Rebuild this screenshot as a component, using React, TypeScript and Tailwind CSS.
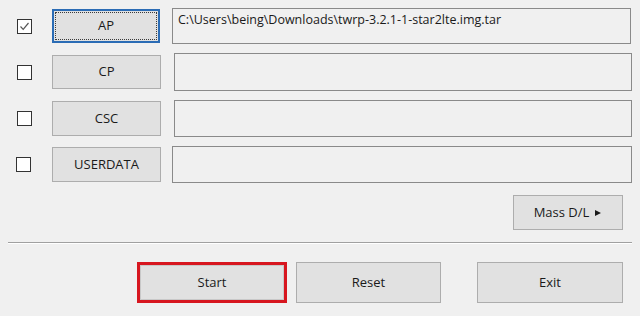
import React from "react";

const font = { fontFamily: '"Open Sans", "Noto Sans", sans-serif' };

function Checkbox({ checked }: { checked?: boolean }) {
  return (
    <div className="w-[15px] h-[15px] border border-[#333333] bg-white flex items-center justify-center shrink-0">
      {checked && (
        <svg width="11" height="11" viewBox="0 0 11 11">
          <polyline points="1.5,5.5 4.2,8.3 9.5,2" fill="none" stroke="#555" strokeWidth="1.2" />
        </svg>
      )}
    </div>
  );
}

function Btn({ label, focused, className = "", children }: { label?: string; focused?: boolean; className?: string; children?: React.ReactNode }) {
  if (focused) {
    return (
      <div className={`border-2 border-[#2b6cb5] bg-[#e1e1e1] p-[1px] shrink-0 ${className}`}>
        <div className="w-full h-full border border-dotted border-[#3a3a3a] flex items-center justify-center text-[13px] text-[#1a1a1a]">
          {label}
        </div>
      </div>
    );
  }
  return (
    <div className={`border border-[#adadad] bg-[#e1e1e1] flex items-center justify-center text-[13px] text-[#1a1a1a] shrink-0 ${className}`}>
      {label}
      {children}
    </div>
  );
}

function Field({ value, className = "" }: { value?: string; className?: string }) {
  return (
    <div className={`border border-[#8a8a8a] bg-[#f0f0f0] pl-[5px] pt-[3px] text-[12.5px] leading-[16px] text-[#1a1a1a] whitespace-nowrap overflow-hidden ${className}`}>
      {value}
    </div>
  );
}

export default function App() {
  return (
    <div className="w-[640px] h-[316px] bg-[#f0f0f0] overflow-hidden pt-[8px]" style={font}>
      <div className="flex items-center h-[36px] pl-[17px]">
        <Checkbox checked />
        <Btn label="AP" focused className="ml-[20px] w-[108px] h-[34px]" />
        <Field value="C:\Users\being\Downloads\twrp-3.2.1-1-star2lte.img.tar" className="ml-[12px] w-[459px] h-[36px]" />
      </div>
      <div className="flex items-center h-[38px] pl-[17px] mt-[9px]">
        <Checkbox />
        <Btn label="CP" className="ml-[20px] w-[109px] h-[34px]" />
        <Field className="ml-[13px] w-[458px] h-[38px]" />
      </div>
      <div className="flex items-center h-[37px] pl-[17px] mt-[9px]">
        <Checkbox />
        <Btn label="CSC" className="ml-[20px] w-[109px] h-[35px]" />
        <Field className="ml-[13px] w-[458px] h-[37px]" />
      </div>
      <div className="flex items-center h-[37px] pl-[16px] mt-[9px]">
        <Checkbox />
        <Btn label="USERDATA" className="ml-[21px] w-[109px] h-[35px]" />
        <Field className="ml-[11px] w-[460px] h-[37px]" />
      </div>
      <div className="flex justify-end pr-[17px] mt-[12px]">
        <Btn label="Mass D/L" className="w-[110px] h-[35px]">
          <svg width="8" height="8" viewBox="0 0 8 8" className="ml-[5px]">
            <polygon points="1,1 7,4 1,7" fill="#1a1a1a" />
          </svg>
        </Btn>
      </div>
      <div className="mx-[8px] mt-[12px] h-[2px] border-t border-[#a0a0a0] border-b border-b-white" />
      <div className="flex mt-[18px] pl-[137px]">
        <div className="border-[3px] border-[#d7161f] w-[150px] h-[41px] shrink-0">
          <div className="w-full h-full bg-[#e1e1e1] border border-[#c8c8c8] flex items-center justify-center text-[13px] text-[#1a1a1a]">Start</div>
        </div>
        <Btn label="Reset" className="ml-[9px] w-[145px] h-[41px]" />
        <Btn label="Exit" className="ml-[36px] w-[146px] h-[41px]" />
      </div>
    </div>
  );
}
